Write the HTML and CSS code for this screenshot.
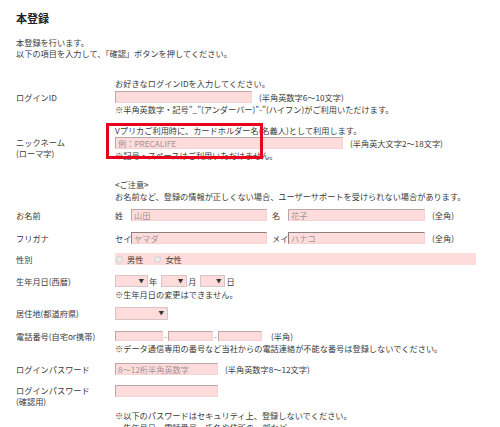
FILE: index.html
```html
<!DOCTYPE html>
<html lang="ja">
<head>
  <meta charset="UTF-8" />
  <title>本登録</title>
  <link rel="stylesheet" href="styles.css">
</head>
<body>
  <div class="page">
    <h1>本登録</h1>
    <p class="intro">本登録を行います。<br>以下の項目を入力して、「確認」ボタンを押してください。</p>

    <div class="row r-login">
      <div class="label pad-login">ログインID</div>
      <div class="field">
        <div class="text">お好きなログインIDを入力してください。</div>
        <div class="line mt2"><input type="text" class="w-id"><span class="suffix">(半角英数字6～10文字)</span></div>
        <div class="text">※半角英数字・記号"_"(アンダーバー)"-"(ハイフン)がご利用いただけます。</div>
      </div>
    </div>

    <div class="row r-nick">
      <div class="label two pad-nick">ニックネーム<br>(ローマ字)</div>
      <div class="field">
        <div class="text">Vプリカご利用時に、カードホルダー名(名義人)として利用します。</div>
        <div class="line mt1"><input type="text" class="w-nick" placeholder="例：PRECALIFE"><span class="suffix">(半角英大文字2～18文字)</span></div>
        <div class="text">※記号・スペースはご利用いただけません。</div>
        <div class="highlight"></div>
      </div>
    </div>

    <div class="caution">
      <div class="text">&lt;ご注意&gt;</div>
      <div class="text">お名前など、登録の情報が正しくない場合、ユーザーサポートを受けられない場合があります。</div>
    </div>

    <div class="row r-name">
      <div class="label">お名前</div>
      <div class="field">
        <div class="line">
          <span class="prefix">姓</span><input type="text" class="w-name" placeholder="山田">
          <span class="prefix gap">名</span><input type="text" class="w-name2" placeholder="花子">
          <span class="suffix">(全角)</span>
        </div>
      </div>
    </div>

    <div class="row r-kana">
      <div class="label">フリガナ</div>
      <div class="field">
        <div class="line">
          <span class="prefix">セイ</span><input type="text" class="w-name dark" placeholder="ヤマダ">
          <span class="prefix gap">メイ</span><input type="text" class="w-name2 dark" placeholder="ハナコ">
          <span class="suffix">(全角)</span>
        </div>
      </div>
    </div>

    <div class="row r-sex">
      <div class="label">性別</div>
      <div class="field">
        <div class="line band">
          <label class="radio"><input type="radio" name="sex">男性</label>
          <label class="radio"><input type="radio" name="sex">女性</label>
        </div>
      </div>
    </div>

    <div class="row r-birth">
      <div class="label">生年月日(西暦)</div>
      <div class="field">
        <div class="line">
          <span class="select s-year"><select></select></span><span class="unit">年</span>
          <span class="select s-month"><select></select></span><span class="unit">月</span>
          <span class="select s-day"><select></select></span><span class="unit">日</span>
        </div>
        <div class="text mt1">※生年月日の変更はできません。</div>
      </div>
    </div>

    <div class="row r-pref">
      <div class="label">居住地(都道府県)</div>
      <div class="field">
        <div class="line tall">
          <span class="select s-pref"><select></select></span>
        </div>
      </div>
    </div>

    <div class="row r-tel">
      <div class="label">電話番号(自宅or携帯)</div>
      <div class="field">
        <div class="line">
          <input type="text" class="tel w-tel1"><span class="dash">-</span><input type="text" class="tel w-tel2"><span class="dash">-</span><input type="text" class="tel w-tel3"><span class="suffix wide">(半角)</span>
        </div>
        <div class="text">※データ通信専用の番号など当社からの電話連絡が不能な番号は登録しないでください。</div>
      </div>
    </div>

    <div class="row r-pass">
      <div class="label">ログインパスワード</div>
      <div class="field">
        <div class="line"><input type="text" class="w-pass" placeholder="8～12桁半角英数字"><span class="suffix">(半角英数字8～12文字)</span></div>
      </div>
    </div>

    <div class="row r-pass2">
      <div class="label two">ログインパスワード<br>(確認用)</div>
      <div class="field">
        <div class="line"><input type="text" class="w-pass"></div>
      </div>
    </div>

    <div class="caution c-pass">
      <div class="text">※以下のパスワードはセキュリティ上、登録しないでください。</div>
      <div class="text">・生年月日、電話番号、氏名や住所の一部など</div>
    </div>
  </div>
</body>
</html>
```

FILE: styles.css
```css
* {
  box-sizing: border-box;
}
body {
  margin: 0;
  font-family: "Noto Sans CJK JP", "Noto Sans", sans-serif;
  font-size: 8.2px;
  color: #3a3a3a;
  background: #fff;
}
.page {
  padding: 11px 0 0 16px;
}
h1 {
  margin: 0;
  font-size: 11px;
  line-height: 14px;
  font-weight: bold;
  color: #222;
}
.intro {
  margin: 12px 0 0;
  line-height: 11px;
}

.row {
  display: flex;
  align-items: flex-start;
}
.label {
  width: 99px;
  flex-shrink: 0;
  line-height: 12px;
  white-space: nowrap;
}
.label.two {
  line-height: 11px;
}
.pad-login {
  padding-top: 14px;
}
.pad-nick {
  padding-top: 13px;
}
.field {
  position: relative;
}
.text {
  line-height: 12px;
  white-space: nowrap;
}
.line {
  display: flex;
  align-items: center;
  height: 12px;
  white-space: nowrap;
}
.line.tall {
  height: 13px;
}
.mt1 { margin-top: 1px; }
.mt2 { margin-top: 2px; }

/* row spacing */
.r-login { margin-top: 18px; }
.r-nick { margin-top: 9px; }
.caution { margin: 17px 0 0 99px; }
.r-name { margin-top: 7px; }
.r-kana { margin-top: 11px; }
.r-sex { margin-top: 9px; }
.r-birth { margin-top: 10px; }
.r-pref { margin-top: 7px; }
.r-tel { margin-top: 10px; }
.r-pass { margin-top: 9px; }
.r-pass2 { margin-top: 10px; }
.c-pass { margin-top: 2px; }

/* inputs */
input[type=text] {
  height: 12px;
  margin: 0;
  padding: 0 2px;
  border: 1px solid;
  border-color: #b9a8a8 #f6d2d2 #f6d2d2 #b9a8a8;
  background: #ffdcdc;
  font: inherit;
  color: #333;
}
input.dark {
  border-color: #8a8080 #f6d2d2 #f6d2d2 #8a8080;
}
input::placeholder {
  color: #a09494;
}
input.tel {
  height: 10px;
}
.w-id { width: 137px; }
.w-nick { width: 228px; }
.w-name { width: 136px; }
.w-name2 { width: 137px; }
.w-tel1 { width: 48px; }
.w-tel2 { width: 45px; }
.w-tel3 { width: 44px; }
.w-pass { width: 103px; }

.suffix {
  margin-left: 7px;
}
.suffix.wide {
  margin-left: 9px;
}
.prefix {
  width: 16px;
}
.prefix.gap {
  margin-left: 5px;
}
.dash {
  width: 5px;
  text-align: center;
  color: #888;
}

/* gender */
.band {
  width: 361px;
  background: #ffdcdc;
}
.radio {
  display: flex;
  align-items: center;
}
.radio + .radio {
  margin-left: 10px;
}
.radio input {
  appearance: none;
  width: 7px;
  height: 7px;
  margin: 0 4px 0 1px;
  border: 1px solid #cfcfcf;
  border-radius: 50%;
  background: #ececec;
}

/* selects */
.select {
  position: relative;
  display: inline-block;
  height: 12px;
}
.select select {
  appearance: none;
  display: block;
  width: 100%;
  height: 100%;
  margin: 0;
  border: 1px solid #d8c4c4;
  background: #ffdcdc;
}
.select::after {
  content: "▼";
  position: absolute;
  right: 4px;
  top: 0;
  font-size: 5.5px;
  line-height: 12px;
  color: #333;
}
.s-year { width: 33px; }
.s-month { width: 26px; }
.s-day { width: 25px; }
.s-pref { width: 53px; height: 13px; }
.s-pref::after { line-height: 13px; }
.unit {
  margin: 0 4px 0 1px;
}

/* annotation box */
.highlight {
  position: absolute;
  left: -9px;
  top: -1px;
  width: 157px;
  height: 36px;
  border: 3px solid #e8001c;
}
```
